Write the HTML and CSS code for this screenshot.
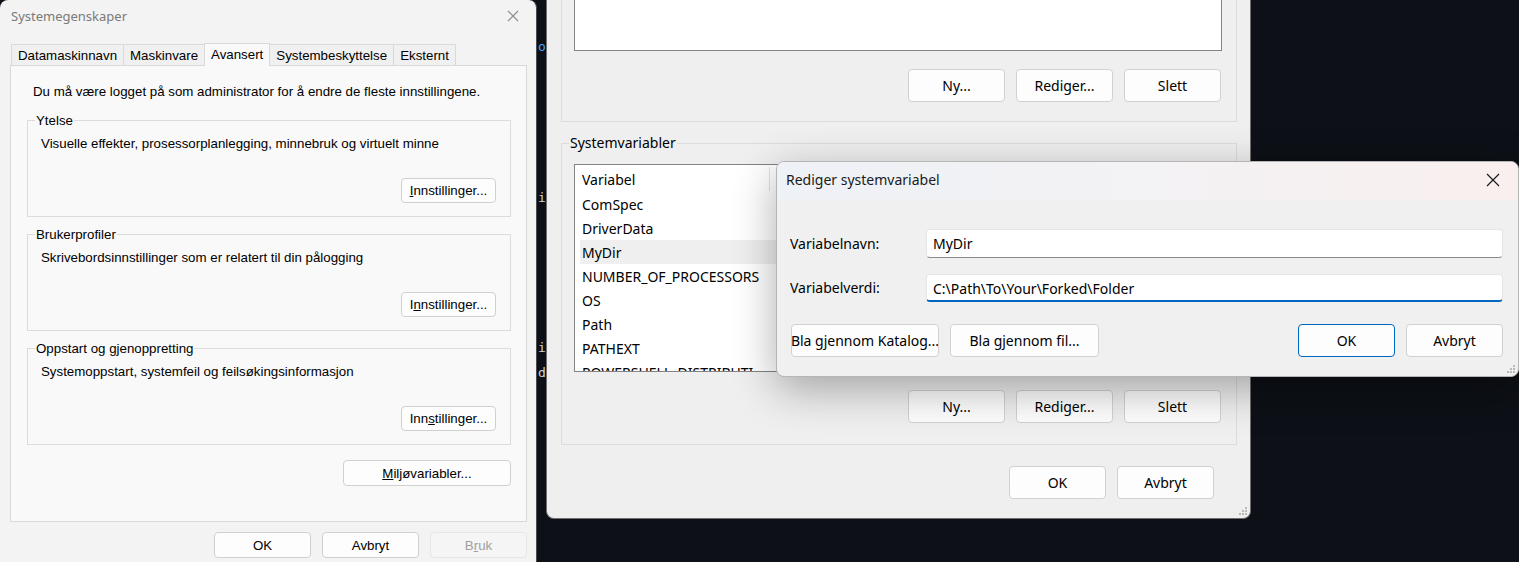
FILE: index.html
```html
<!DOCTYPE html>
<html lang="no">
<head>
<meta charset="utf-8">
<title>Systemegenskaper</title>
<link rel="stylesheet" href="styles.css">
</head>
<body>
<pre class="term"><span class="t-blue">o</span>





<span>i</span>





<span>i</span>
<span>d</span></pre>

<section class="win win-sys">
  <header class="sys-title">
    <span>Systemegenskaper</span>
    <span class="sys-close"><svg width="12" height="12" viewBox="0 0 12 12"><path d="M1 1L11 11M11 1L1 11" stroke="#8c8c8c" stroke-width="1.1" fill="none"/></svg></span>
  </header>
  <nav class="tabs">
    <span class="tab">Datamaskinnavn</span>
    <span class="tab">Maskinvare</span>
    <span class="tab tab-active">Avansert</span>
    <span class="tab">Systembeskyttelse</span>
    <span class="tab">Eksternt</span>
  </nav>
  <div class="panel">
    <p class="intro">Du må være logget på som administrator for å endre de fleste innstillingene.</p>
    <div class="group">
      <span class="group-label">Ytelse</span>
      <p class="group-desc">Visuelle effekter, prosessorplanlegging, minnebruk og virtuelt minne</p>
      <div class="group-actions"><button class="btn-s btn-set"><u>I</u>nnstillinger...</button></div>
    </div>
    <div class="group">
      <span class="group-label">Brukerprofiler</span>
      <p class="group-desc">Skrivebordsinnstillinger som er relatert til din pålogging</p>
      <div class="group-actions"><button class="btn-s btn-set">I<u>n</u>nstillinger...</button></div>
    </div>
    <div class="group">
      <span class="group-label">Oppstart og gjenoppretting</span>
      <p class="group-desc">Systemoppstart, systemfeil og feilsøkingsinformasjon</p>
      <div class="group-actions"><button class="btn-s btn-set">Inn<u>s</u>tillinger...</button></div>
    </div>
    <div class="env-row"><button class="btn-s btn-env"><u>M</u>iljøvariabler...</button></div>
  </div>
  <footer class="sys-footer">
    <button class="btn-s btn-foot">OK</button>
    <button class="btn-s btn-foot">Avbryt</button>
    <button class="btn-s btn-foot btn-disabled">B<u>r</u>uk</button>
  </footer>
</section>

<section class="win win-env">
  <div class="egroup egroup-user">
    <div class="elist elist-user"></div>
    <div class="ebtn-row">
      <button class="btn-m">Ny...</button>
      <button class="btn-m">Rediger...</button>
      <button class="btn-m">Slett</button>
    </div>
  </div>
  <div class="egroup egroup-sys">
    <span class="egroup-label">Systemvariabler</span>
    <div class="elist elist-sys">
      <div class="lrow lhead"><span class="lcol1">Variabel</span></div>
      <div class="lrow"><span class="lcol1">ComSpec</span></div>
      <div class="lrow"><span class="lcol1">DriverData</span></div>
      <div class="lrow lsel"><span class="lcol1">MyDir</span></div>
      <div class="lrow"><span class="lcol1">NUMBER_OF_PROCESSORS</span></div>
      <div class="lrow"><span class="lcol1">OS</span></div>
      <div class="lrow"><span class="lcol1">Path</span></div>
      <div class="lrow"><span class="lcol1">PATHEXT</span></div>
      <div class="lrow"><span class="lcol1">POWERSHELL_DISTRIBUTI</span></div>
    </div>
    <div class="ebtn-row">
      <button class="btn-m">Ny...</button>
      <button class="btn-m">Rediger...</button>
      <button class="btn-m">Slett</button>
    </div>
  </div>
  <div class="efooter">
    <button class="btn-m">OK</button>
    <button class="btn-m">Avbryt</button>
  </div>
  <svg class="grip" width="9" height="9" viewBox="0 0 9 9"><g fill="#b9b9b9"><rect x="6" y="0" width="2" height="2"/><rect x="3" y="3" width="2" height="2"/><rect x="6" y="3" width="2" height="2"/><rect x="0" y="6" width="2" height="2"/><rect x="3" y="6" width="2" height="2"/><rect x="6" y="6" width="2" height="2"/></g></svg>
</section>

<section class="win win-edit">
  <header class="edit-title">
    <span>Rediger systemvariabel</span>
    <span class="edit-close"><svg width="14" height="14" viewBox="0 0 14 14"><path d="M1 1L13 13M13 1L1 13" stroke="#1b1b1b" stroke-width="1.2" fill="none"/></svg></span>
  </header>
  <div class="edit-body">
    <div class="edit-form">
      <label class="edit-label">Variabelnavn:</label>
      <div class="edit-input">MyDir</div>
      <label class="edit-label">Variabelverdi:</label>
      <div class="edit-input edit-focus">C:\Path\To\Your\Forked\Folder</div>
    </div>
    <div class="edit-actions">
      <button class="btn-m btn-browse"><span>Bla gjennom Katalog...</span></button>
      <button class="btn-m btn-browse2">Bla gjennom fil...</button>
      <span class="spacer"></span>
      <button class="btn-m btn-default">OK</button>
      <button class="btn-m">Avbryt</button>
    </div>
  </div>
  <svg class="grip" width="9" height="9" viewBox="0 0 9 9"><g fill="#b9b9b9"><rect x="6" y="0" width="2" height="2"/><rect x="3" y="3" width="2" height="2"/><rect x="6" y="3" width="2" height="2"/><rect x="0" y="6" width="2" height="2"/><rect x="3" y="6" width="2" height="2"/><rect x="6" y="6" width="2" height="2"/></g></svg>
</section>
</body>
</html>
```

FILE: styles.css
```css
* { box-sizing: border-box; }
html, body { margin: 0; padding: 0; }
body {
  width: 1519px;
  height: 562px;
  overflow: hidden;
  position: relative;
  background: #0d1016;
  font-family: "Noto Sans", sans-serif;
}
button { font: inherit; color: inherit; cursor: default; }
p { margin: 0; }

/* terminal strip behind windows */
.term {
  position: absolute;
  left: 538px;
  top: 0;
  width: 8px;
  height: 562px;
  margin: 0;
  padding-top: 34px;
  overflow: hidden;
  font-family: "DejaVu Sans Mono", monospace;
  font-size: 13px;
  line-height: 25.1px;
  color: #cfd3da;
}
.t-blue { color: #4aa3ff; }

.win { position: absolute; }

/* ---------- Systemegenskaper ---------- */
.win-sys {
  left: 0;
  top: 0;
  width: 537px;
  height: 580px;
  background: #f3f3f3;
  border-right: 1px solid #4b4b4b;
  border-radius: 8px 8px 0 0;
  font-family: "Liberation Sans", Arial, sans-serif;
  font-size: 13.3px;
  color: #000;
  display: flex;
  flex-direction: column;
}
.sys-title {
  height: 32px;
  display: flex;
  align-items: center;
  justify-content: space-between;
  padding-left: 11px;
  font-family: "Noto Sans", sans-serif;
  font-size: 13px;
  color: #7a7a7a;
}
.sys-close {
  width: 46px;
  height: 32px;
  display: flex;
  align-items: center;
  justify-content: center;
}
.tabs {
  margin-top: 10px;
  height: 23px;
  padding-left: 11px;
  display: flex;
  align-items: flex-end;
}
.tab {
  height: 21px;
  padding: 0 6px;
  display: flex;
  align-items: center;
  background: #f0f0f0;
  border: 1px solid #d9d9d9;
  border-bottom: none;
  margin-right: -1px;
}
.tab-active {
  height: 23px;
  background: #f9f9f9;
  margin-bottom: -1px;
  padding-bottom: 2px;
  position: relative;
  z-index: 1;
}
.panel {
  margin-left: 10px;
  width: 517px;
  height: 457px;
  background: #f9f9f9;
  border: 1px solid #d9d9d9;
  padding: 18px 15px 0 16px;
  display: flex;
  flex-direction: column;
}
.intro {
  margin-left: 6px;
  line-height: 15px;
}
.group {
  margin-top: 21px;
  height: 97px;
  border: 1px solid #dcdcdc;
  display: flex;
  flex-direction: column;
  padding: 0 14px 13px 13px;
}
.group + .group { margin-top: 17px; }
.group-label {
  align-self: flex-start;
  margin-top: -8px;
  margin-left: -6px;
  padding: 0 1px;
  line-height: 15px;
  background: #f9f9f9;
}
.group-desc {
  margin-top: 8px;
  line-height: 15px;
}
.group-actions {
  margin-top: auto;
  display: flex;
  justify-content: flex-end;
}
.btn-s {
  height: 25px;
  background: #fdfdfd;
  border: 1px solid #d0d0d0;
  border-radius: 4px;
  padding: 0;
  display: flex;
  align-items: center;
  justify-content: center;
  white-space: nowrap;
}
.btn-set { width: 95px; }
.env-row {
  margin-top: 15px;
  display: flex;
  justify-content: flex-end;
}
.btn-env { width: 168px; height: 26px; }
.sys-footer {
  display: flex;
  justify-content: flex-end;
  gap: 11px;
  padding: 10px 9px 0 0;
}
.btn-foot { width: 97px; height: 26px; }
.btn-disabled {
  color: #a0a0a0;
  background: #f5f5f5;
  border-color: #e6e6e6;
}

/* ---------- Miljøvariabler window ---------- */
.win-env {
  left: 546px;
  top: 0;
  width: 705px;
  height: 519px;
  background: #efefef;
  border: 1px solid #6f6f6f;
  border-top: none;
  border-radius: 0 0 8px 8px;
  font-size: 14px;
  color: #000;
  padding: 0 13px 0 14px;
  display: flex;
  flex-direction: column;
}
.egroup {
  border: 1px solid #dcdcdc;
  display: flex;
  flex-direction: column;
  padding: 0 15px 0 12px;
}
.egroup-user {
  height: 122px;
  border-top: none;
}
.elist {
  background: #fff;
  border: 1px solid #838383;
  width: 648px;
}
.elist-user {
  height: 51px;
  border-top: none;
}
.ebtn-row {
  margin-top: 18px;
  display: flex;
  justify-content: flex-end;
  gap: 11px;
}
.btn-m {
  width: 97px;
  height: 33px;
  background: #fdfdfd;
  border: 1px solid #d1d1d1;
  border-radius: 4px;
  padding: 0;
  font-size: 14px;
  display: flex;
  align-items: center;
  justify-content: center;
  white-space: nowrap;
}
.egroup-sys {
  margin-top: 21px;
  height: 302px;
}
.egroup-label {
  align-self: flex-start;
  margin-top: -11px;
  margin-left: -5px;
  line-height: 20px;
  background: #efefef;
  padding: 0 1px;
}
.elist-sys {
  margin-top: 11px;
  height: 208px;
  overflow: hidden;
  padding-top: 1px;
}
.lrow {
  height: 24px;
  display: flex;
  align-items: center;
  margin-left: 5px;
  padding-left: 2px;
  white-space: nowrap;
}
.lhead { height: 26px; }
.lcol1 { width: 188px; flex: none; }
.lhead .lcol1 { border-right: 1px solid #e3e3e3; height: 24px; display: flex; align-items: center; }
.lsel { background: #efefef; }
.efooter {
  margin-top: 21px;
  display: flex;
  justify-content: flex-end;
  gap: 11px;
  padding-right: 23px;
}
.grip {
  position: absolute;
  right: 2px;
  bottom: 2px;
}

/* ---------- Rediger systemvariabel ---------- */
.win-edit {
  left: 776px;
  top: 161px;
  width: 743px;
  height: 216px;
  background: #f0f0f0;
  border: 1px solid #b5b5b5;
  border-radius: 8px;
  overflow: hidden;
  box-shadow: 0 12px 44px rgba(0, 0, 0, 0.32);
  font-size: 14px;
  color: #000;
  display: flex;
  flex-direction: column;
}
.edit-title {
  height: 38px;
  flex: none;
  display: flex;
  align-items: center;
  justify-content: space-between;
  padding-left: 9px;
  padding-bottom: 3px;
  background: linear-gradient(90deg, #eef1f6 0%, #f3f2f4 50%, #f9efee 100%);
  color: #1a1a1a;
}
.edit-close {
  width: 46px;
  height: 34px;
  display: flex;
  align-items: center;
  justify-content: center;
  margin-right: 2px;
}
.edit-body {
  padding: 29px 15px 0 13px;
  display: flex;
  flex-direction: column;
}
.edit-form {
  display: grid;
  grid-template-columns: 136px 1fr;
  grid-template-rows: 29px 28px;
  row-gap: 16px;
  align-items: center;
}
.edit-label { line-height: 20px; }
.edit-input {
  height: 100%;
  background: #fff;
  border: 1px solid #e5e5e5;
  border-bottom: 1px solid #8a8a8a;
  border-radius: 4px;
  padding-left: 6px;
  display: flex;
  align-items: center;
}
.edit-focus {
  border-bottom: 2px solid #0067c0;
  padding-top: 1px;
}
.edit-actions {
  margin-top: 22px;
  display: flex;
  gap: 11px;
}
.btn-browse {
  width: 148px;
  margin-left: 1px;
  overflow: hidden;
}
.btn-browse span { flex: none; }
.btn-browse2 { width: 149px; }
.spacer { flex: 1; }
.btn-default { border-color: #0067c0; }
```
